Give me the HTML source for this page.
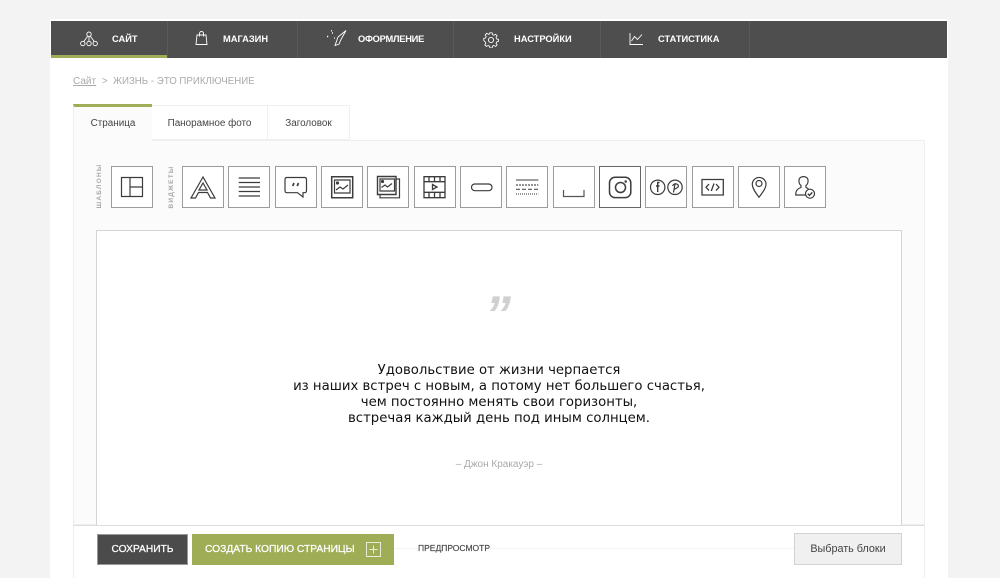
<!DOCTYPE html>
<html lang="ru"><head><meta charset="utf-8"><title>Страница</title>
<style>
html,body{margin:0;padding:0;width:1000px;height:578px;overflow:hidden;background:#f3f3f3;font-family:"Liberation Sans",sans-serif}
div,span,svg{position:absolute;box-sizing:border-box}
.n{top:0;height:37px;line-height:37px;color:#fff;font-size:9.3px;font-weight:bold;white-space:nowrap}
.sep{top:0;width:1px;height:37px;background:#5a5a5a}
.b{top:166px;width:42px;height:42px;border:1px solid #9c9c9c;background:#fff}
.b svg{left:0;top:0;width:40px;height:40px;fill:none;stroke:#3c3c3c;stroke-width:1.2}
.t{top:105px;height:35px;line-height:35px;font-size:9.9px;color:#444;text-align:center;border:1px solid #f0f0f0;border-left:0;background:#fff}
.v{font-size:6.5px;color:#aaa;letter-spacing:1.2px;font-weight:bold;transform:rotate(-90deg);transform-origin:center;white-space:nowrap;text-align:center;width:50px;height:10px;line-height:10px}
.q{left:97px;width:804px;text-align:center;font-family:"DejaVu Sans",sans-serif;font-size:13.25px;color:#111;line-height:17px;height:17px;white-space:nowrap}
</style></head><body>
<div style="left:50px;top:19px;width:898px;height:559px;background:#fff"></div>

<div style="left:51px;top:21px;width:896px;height:37px;background:#4e4e4e">
 <div style="left:0;top:34px;width:116px;height:3px;background:#a0ad57"></div>
 <div class="sep" style="left:116px"></div><div class="sep" style="left:246px"></div><div class="sep" style="left:402px"></div><div class="sep" style="left:549px"></div><div class="sep" style="left:698px"></div>
 <svg style="left:29px;top:10px" width="18" height="16" viewBox="0 0 18 16" fill="none" stroke="#fff" stroke-width=".9"><circle cx="9" cy="3.2" r="2.2"/><circle cx="2.8" cy="12.5" r="2.2"/><circle cx="9" cy="12.5" r="2.2"/><circle cx="15.2" cy="12.5" r="2.2"/><path d="M7.8 5 3.8 10.5M9 5.4V10.3M10.2 5l4 5.5"/></svg>
 <span class="n" style="left:61px">САЙТ</span>
 <svg style="left:144px;top:10px" width="13" height="15" viewBox="0 0 13 15" fill="none" stroke="#fff" stroke-width=".9"><path d="M2 4h9l1 9.500H1zM4.500 5.500V2.500a2 2 0 0 1 4 0v3"/></svg>
 <span class="n" style="left:172px">МАГАЗИН</span>
 <svg style="left:275px;top:9px" width="21" height="17" viewBox="0 0 21 17" fill="none" stroke="#fff" stroke-width=".9"><path d="M20 .5 12 7 9 15.500 13 14 15 9.500z"/><path d="M1 6.500h1.200M6 3h1M5 .8h1M8 8h.8" stroke-width="1.400"/></svg>
 <span class="n" style="left:307px;letter-spacing:-.25px">ОФОРМЛЕНИЕ</span>
 <svg style="left:432px;top:11px" width="16" height="16" viewBox="0 0 16 16" fill="none" stroke="#fff" stroke-width=".9"><circle cx="8" cy="8" r="2.600"/><path d="M6.800 1h2.400l.4 2 1.500.7 1.800-1.100 1.600 1.700-1.100 1.700.7 1.600 1.900.4v2.200l-1.900.5-.7 1.500 1.100 1.800-1.600 1.600-1.800-1.100-1.500.7-.4 2H6.800l-.4-2-1.600-.7-1.700 1.100-1.700-1.600 1.100-1.800-.7-1.500L.3 9.200V7l1.900-.4.700-1.600-1.100-1.700 1.700-1.700 1.700 1.100 1.600-.7z" transform="scale(.94) translate(.5 -.2)"/></svg>
 <span class="n" style="left:463px">НАСТРОЙКИ</span>
 <svg style="left:578px;top:11px" width="15" height="14" viewBox="0 0 15 14" fill="none" stroke="#fff" stroke-width=".9"><path d="M1 1V12.500H14M2.500 9 5.500 4.500 8.500 7.500 13 2.500"/></svg>
 <span class="n" style="left:607px">СТАТИСТИКА</span>
</div>

<div style="left:73px;top:75px;font-size:10px;line-height:13px;color:#aaa;text-decoration:underline;height:13px">Сайт</div>
<div style="left:102px;top:75px;font-size:9.700px;line-height:13px;color:#aaa;height:13px;white-space:nowrap">&gt;&nbsp; ЖИЗНЬ - ЭТО ПРИКЛЮЧЕНИЕ</div>

<div style="left:73px;top:140px;width:852px;height:385px;background:#fbfbfb;border:1px solid #eee"></div>
<div class="t" style="left:73px;top:104px;width:79px;height:37px;background:#fbfbfb;border:0;border-left:1px solid #eee;border-top:3px solid #a0ad57;line-height:33px">Страница</div>
<div class="t" style="left:152px;width:116px">Панорамное фото</div>
<div class="t" style="left:268px;width:82px">Заголовок</div>

<div class="v" style="left:75px;top:181px">ШАБЛОНЫ</div>
<div class="v" style="left:147px;top:182px">ВИДЖЕТЫ</div>

<div class="b" style="left:111px"><svg viewBox="0 0 40 40"><path d="M9.500 10.500H30.500V29.500H9.500ZM18 10.500V29.500M18 20H30.500"/></svg></div>
<div class="b" style="left:182px"><svg viewBox="0 0 40 40"><path d="M20 10 8 31H12.500L15.500 25.500H24.500L27.500 31H32ZM20 16 16 23H24Z"/></svg></div>
<div class="b" style="left:228px"><svg viewBox="0 0 40 40" style="stroke-width:1.300"><path d="M9.700 11H31M9.700 15.500H31M9.700 20H31M9.700 24.500H31M9.700 29H31"/></svg></div>
<div class="b" style="left:275px"><svg viewBox="0 0 40 40"><path d="M11 10.500H28.500Q30.500 10.500 30.500 12.500V23.500Q30.500 25.700 28.500 25.700H27L27 30 21.500 25.700H11Q9 25.700 9 23.500V12.500Q9 10.500 11 10.500Z"/><path d="M18 16 16.700 19M22.500 16 21.200 19" stroke-width="1.700"/></svg></div>
<div class="b" style="left:321px"><svg viewBox="0 0 40 40"><path stroke-width="1.500" d="M9.700 9.700H30.700V30.700H9.700Z"/><path d="M12.500 13H28V26H12.500Z"/><circle cx="15.500" cy="16" r="1" fill="#3c3c3c"/><path d="M14 23 18 20 21 22 26 18"/></svg></div>
<div class="b" style="left:367px"><svg viewBox="0 0 40 40" style="left:1px"><path d="M8.500 9.500H27V27.500H8.500Z" stroke-width="1.400"/><path d="M11 12H25.500V24H11ZM27 12H30.500V30.800H11V27.500"/><circle cx="13.500" cy="14.500" r="1" fill="#3c3c3c"/><path d="M12.500 20.500 16 18 18.500 20 23 16.500"/></svg></div>
<div class="b" style="left:414px"><svg viewBox="0 0 40 40"><path stroke-width="1.300" d="M9 9.700H30V30.700H9ZM9 14.700H30M9 25.300H30M14 9.700V14.700M19.500 9.700V14.700M25 9.700V14.700M14 25.300V30.700M19.500 25.300V30.700M25 25.300V30.700M17.500 17.500 22 20 17.500 22.500Z"/></svg></div>
<div class="b" style="left:460px"><svg viewBox="0 0 40 40" style="left:1px"><rect x="9.500" y="17" width="20.500" height="6.700" rx="3.350"/></svg></div>
<div class="b" style="left:506px"><svg viewBox="0 0 40 40" style="left:1px"><path d="M8 13H30.300" stroke-width="1.100"/><path d="M8 18H30.300" stroke-dasharray="2 1" stroke="#555"/><path d="M8 22.300H30.300" stroke-dasharray="4 2" stroke="#555"/><path d="M8 27H30.300" stroke-dasharray="1 1" stroke="#777" stroke-width="1.500"/></svg></div>
<div class="b" style="left:553px"><svg viewBox="0 0 40 40"><path d="M9.500 23V29.500H30V23" stroke="#555"/></svg></div>
<div class="b" style="left:599px;border-color:#666"><svg viewBox="0 0 40 40" style="stroke-width:1.500"><rect x="9.500" y="10.300" width="21.300" height="20.300" rx="5.500"/><circle cx="20.500" cy="20.500" r="5"/><circle cx="25.700" cy="14.500" r=".5" fill="#3c3c3c"/></svg></div>
<div class="b" style="left:645px"><svg viewBox="0 0 40 40" style="left:1px"><circle cx="10.700" cy="20.300" r="7.200"/><circle cx="28" cy="20.300" r="7.200"/><path d="M12.500 15.500H10.700V25M9 19H12.500" stroke-width="1.400"/><path d="M26.500 25.500 28 17M25.500 19Q27.500 15.500 30.500 17.500T27 22.500"/></svg></div>
<div class="b" style="left:692px"><svg viewBox="0 0 40 40" style="stroke-width:1.300"><path d="M9 12.500H30.300V28H9ZM16 17 13 20.300 16 23.500M23 17 26 20.300 23 23.500M21 16.500 18.300 24"/></svg></div>
<div class="b" style="left:738px"><svg viewBox="0 0 40 40"><path d="M20 30.300C16 25 13.300 21 13.300 17.300A6.800 6.800 0 0 1 27 17.300C27 21 24 25 20 30.300Z"/><circle cx="20" cy="16.500" r="3"/></svg></div>
<div class="b" style="left:784px"><svg viewBox="0 0 40 40" style="left:1px"><path d="M19.500 28H9.700C9.700 24 11 22 15 20.500V18.500C12.500 16.500 12 11.500 15 10.200Q17.500 9 20 10.200C23 11.500 22.500 16.500 20 18.500V20.500L22.500 21.800"/><circle cx="24" cy="26.700" r="4.500"/><path d="M21.800 26.700 23.500 28.400 26.300 25.400" stroke-width="1.400"/></svg></div>

<div style="left:96px;top:230px;width:806px;height:296px;background:#fff;border:1px solid #d4d4d0"></div>

<div style="left:485px;top:289px;width:30px;height:52px;font-family:'Liberation Sans',sans-serif;font-weight:bold;font-style:italic;font-size:52px;line-height:52px;color:#d0d0d0">”</div>

<div class="q" style="top:362px">Удовольствие от жизни черпается</div>
<div class="q" style="top:378px">из наших встреч с новым, а потому нет большего счастья,</div>
<div class="q" style="top:394px">чем постоянно менять свои горизонты,</div>
<div class="q" style="top:410px">встречая каждый день под иным солнцем.</div>
<div class="q" style="top:456px;font-family:'Liberation Sans',sans-serif;font-size:10px;color:#aaa">– Джон Кракауэр –</div>

<div style="left:73px;top:525px;width:852px;height:53px;background:#fff;border-top:1px solid #ddd;border-left:1px solid #eee;border-right:1px solid #eee"></div>
<div style="left:97px;top:534px;width:91px;height:31px;background:#4b4b4b;border:1px solid #999;color:#fff;font-size:10.200px;line-height:29px;text-align:center;white-space:nowrap;-webkit-text-stroke:.25px #fff">СОХРАНИТЬ</div>
<div style="left:192px;top:534px;width:202px;height:31px;background:#a0ad57;color:#fff;font-size:10.250px;line-height:31px;padding-left:13px;white-space:nowrap;-webkit-text-stroke:.25px #fff">СОЗДАТЬ КОПИЮ СТРАНИЦЫ</div>
<svg style="left:366px;top:542px" width="15" height="15" viewBox="0 0 15 15" fill="none" stroke="#e8ecd4"><path d="M.5.5H14.500V14.500H.5ZM7.500 3.500V11.500M3.500 7.500H11.500"/></svg>
<div style="left:394px;top:548px;width:400px;height:1px;background:#f3f3f3"></div>
<div style="left:418px;top:542px;height:13px;line-height:13px;padding:0;font-size:8.500px;color:#444;background:#fff;white-space:nowrap;-webkit-text-stroke:.15px #444">ПРЕДПРОСМОТР</div>
<div style="left:794px;top:533px;width:108px;height:32px;background:#f0f0f0;border:1px solid #d2d2d2;color:#444;font-size:10.800px;line-height:30px;text-align:center;white-space:nowrap">Выбрать блоки</div>
</body></html>
